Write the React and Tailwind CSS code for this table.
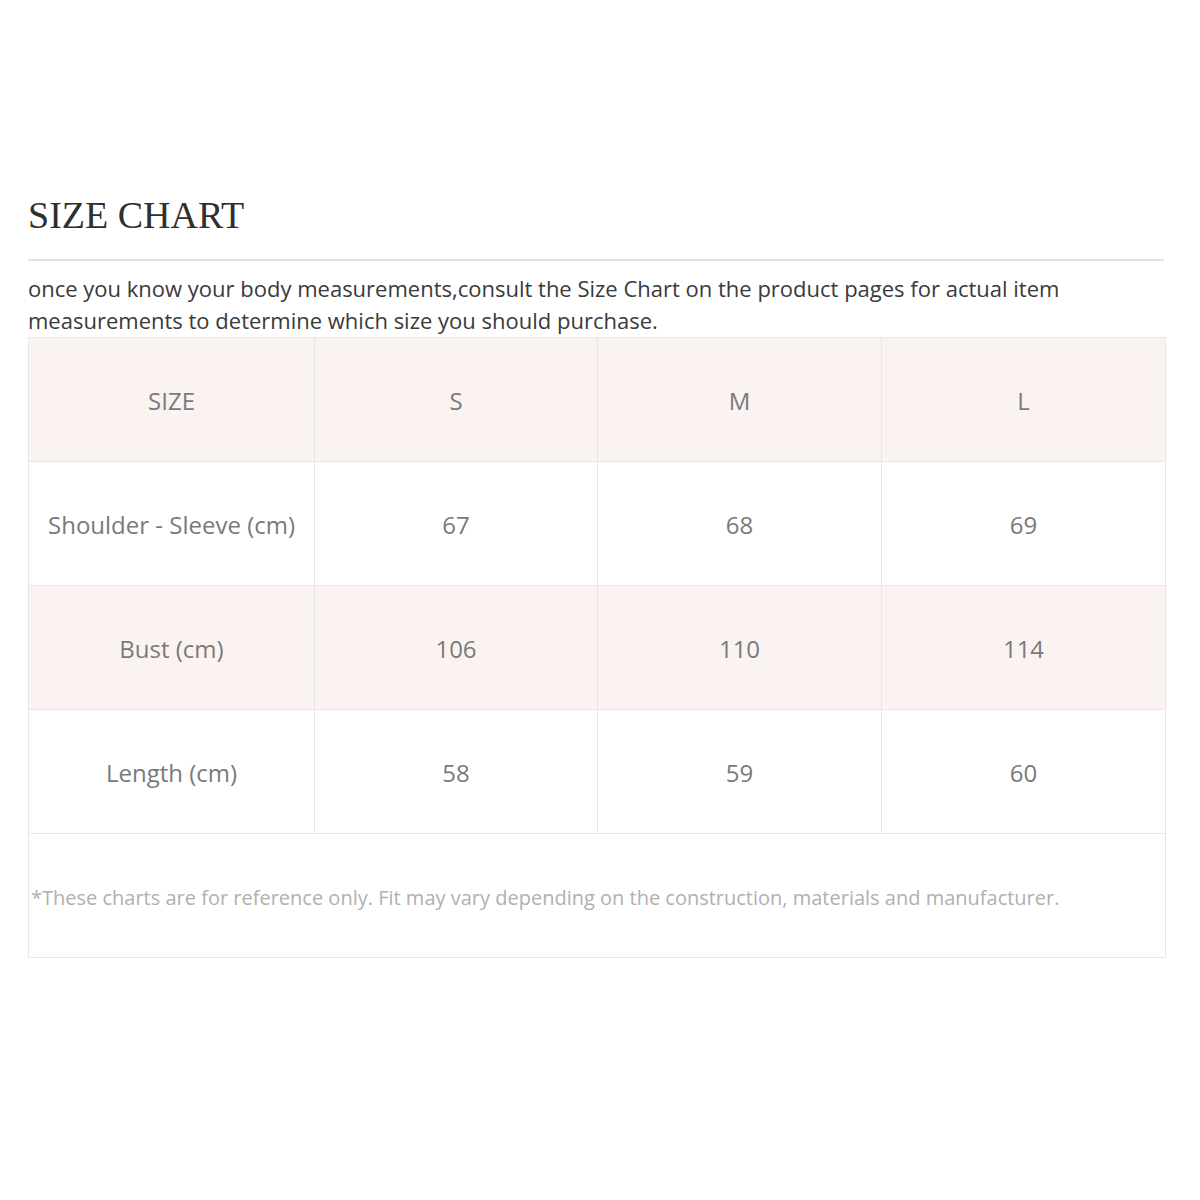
const rows = [
  { label: "Shoulder - Sleeve (cm)", values: ["67", "68", "69"], shaded: false },
  { label: "Bust (cm)", values: ["106", "110", "114"], shaded: true },
  { label: "Length (cm)", values: ["58", "59", "60"], shaded: false },
];

const cell = "h-[124px] pt-[2px] flex items-center justify-center border-r border-b border-[#e6e6e6]";

export default function App() {
  return (
    <div className="w-[1200px] h-[1200px] bg-white pt-[192px] px-[28px]">
      <h1 className="text-[38px] leading-[46px] text-[#2f2f2f] font-['Liberation_Serif',serif]">
        SIZE CHART
      </h1>
      <div className="mt-[21px] w-[1136px] h-[2px] bg-[#e2e2e2]" />
      <p className="mt-[11px] w-[1136px] text-[22px] leading-[32px] text-[#3a3a3a] font-['Open_Sans',sans-serif]">
        once you know your body measurements,consult the Size Chart on the product pages for actual item measurements to determine which size you should purchase.
      </p>

      <div className="mt-[1px] w-[1138px] border-l border-t border-[#e6e6e6] font-['Open_Sans',sans-serif] text-[24px] text-[#7a7a7a]">
        <div className="grid grid-cols-[286px_283px_284px_284px] bg-[#fbf3f2]">
          <div className={cell}>SIZE</div>
          <div className={cell}>S</div>
          <div className={cell}>M</div>
          <div className={cell}>L</div>
        </div>
        {rows.map((r) => (
          <div
            key={r.label}
            className={`grid grid-cols-[286px_283px_284px_284px] ${r.shaded ? "bg-[#fbf3f2]" : "bg-white"}`}
          >
            <div className={cell}>{r.label}</div>
            {r.values.map((v) => (
              <div key={v} className={cell}>
                {v}
              </div>
            ))}
          </div>
        ))}
        <div className="h-[124px] pt-[4px] flex items-center pl-[2px] border-r border-b border-[#e6e6e6] text-[20px] text-[#b0b0b0]">
          *These charts are for reference only. Fit may vary depending on the construction, materials and manufacturer.
        </div>
      </div>
    </div>
  );
}
